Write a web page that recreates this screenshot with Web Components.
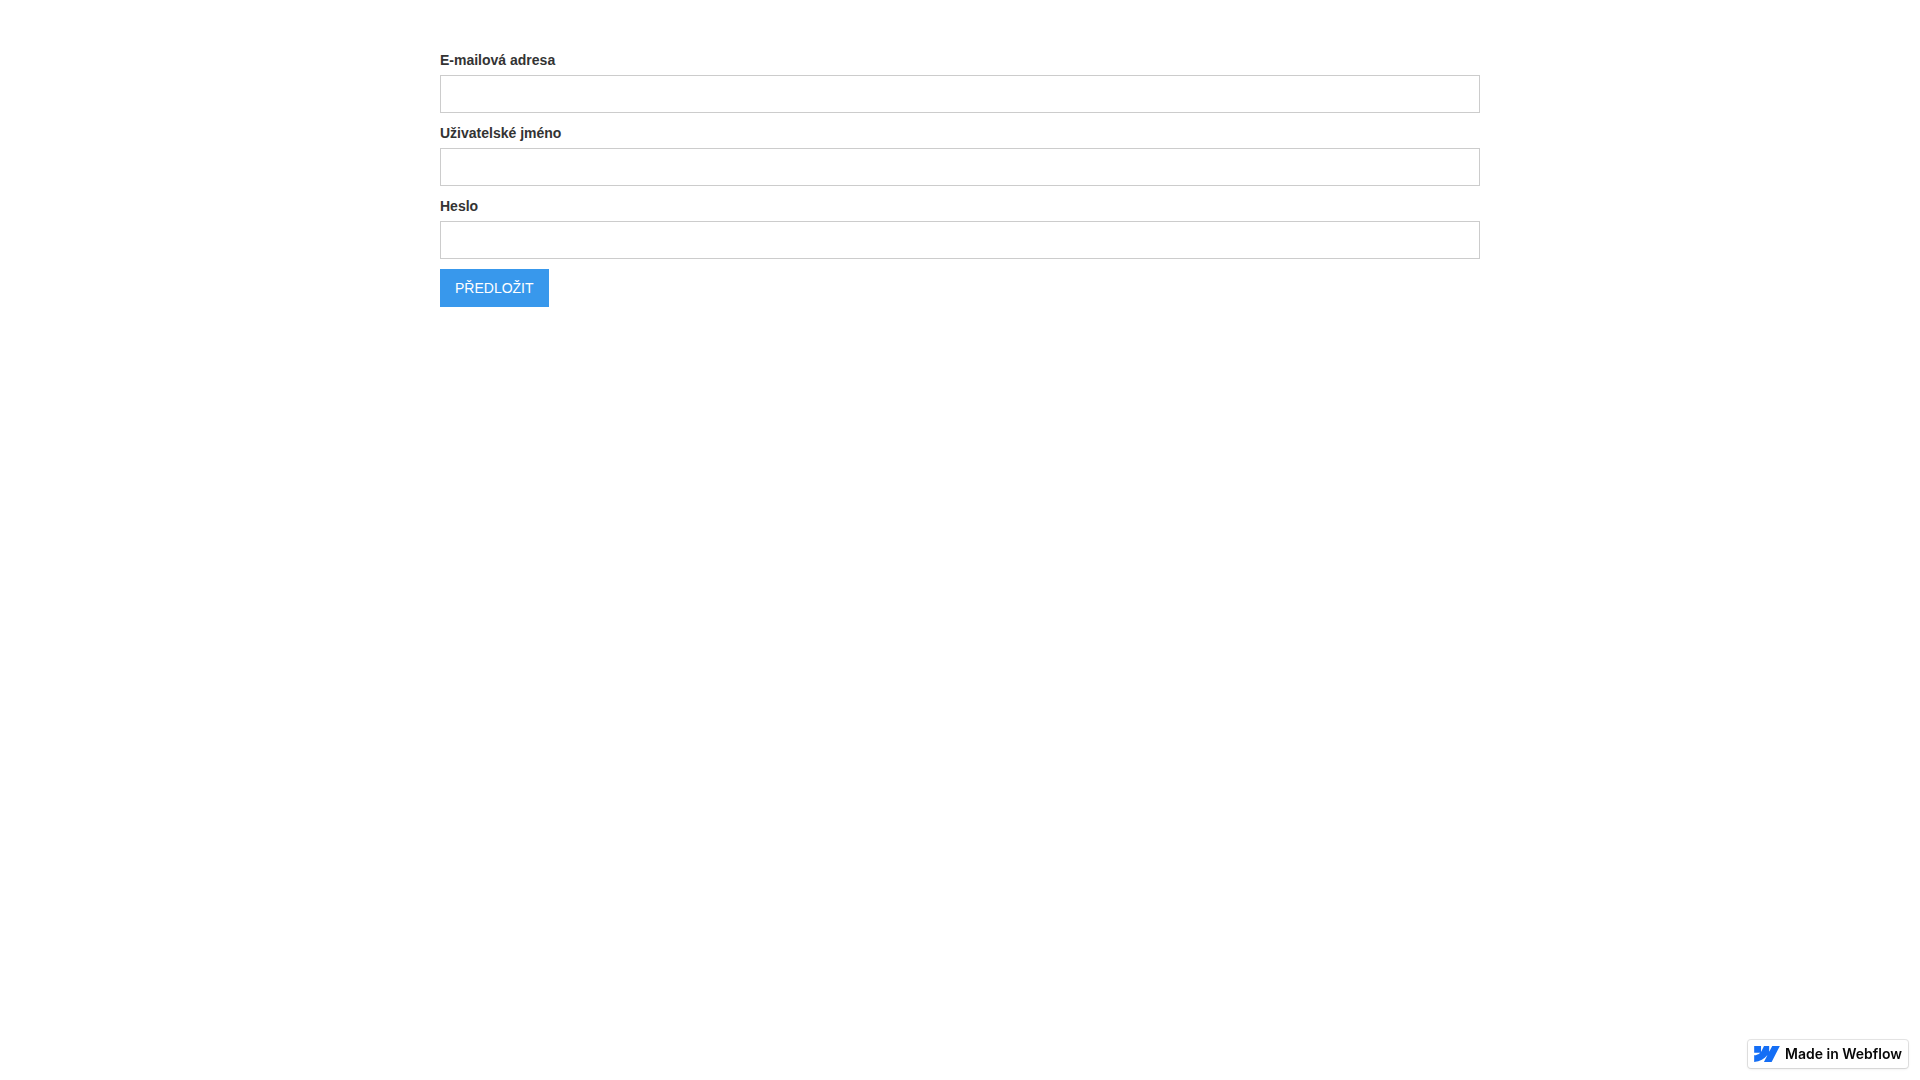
<!DOCTYPE html>
<html lang="cs">
<head>
<meta charset="utf-8">
<meta name="viewport" content="width=device-width, initial-scale=1">
<title>Registrace</title>
<style>
body { margin: 0; font: 14px/20px "Liberation Sans", Arial, sans-serif; color: #333; background: #fff; }
</style>
</head>
<body>
<signup-form>
  <form-field label="E-mailová adresa" type="email" name="email"></form-field>
  <form-field label="Uživatelské jméno" type="text" name="username"></form-field>
  <form-field label="Heslo" type="password" name="password"></form-field>
  <submit-button slot="action">PŘEDLOŽIT</submit-button>
</signup-form>
<made-in-badge>Made in Webflow</made-in-badge>
<script>
class SignupForm extends HTMLElement {
  constructor() {
    super();
    this.attachShadow({ mode: "open" }).innerHTML = `
      <style>
        :host { display: block; padding: 50px 20px; }
        form { display: flex; flex-direction: column; align-items: stretch; gap: 10px; max-width: 1040px; margin: 0 auto; }
        .actions { display: flex; }
      </style>
      <form><slot></slot><div class="actions"><slot name="action"></slot></div></form>`;
  }
}

class FormField extends HTMLElement {
  constructor() {
    super();
    this.attachShadow({ mode: "open" }).innerHTML = `
      <style>
        :host { display: flex; flex-direction: column; gap: 5px; }
        label { font-weight: 700; }
        input { box-sizing: border-box; width: 100%; height: 38px; margin: 0; padding: 8px 12px; border: 1px solid #ccc; border-radius: 0; background: #fff; color: #333; font: inherit; }
        input:focus { border-color: #3898ec; outline: 0; }
      </style>
      <label for="control"></label><input id="control">`;
  }
  connectedCallback() {
    this.shadowRoot.querySelector("label").textContent = this.getAttribute("label");
    const input = this.shadowRoot.querySelector("input");
    input.type = this.getAttribute("type");
    input.name = this.getAttribute("name");
  }
}

class SubmitButton extends HTMLElement {
  constructor() {
    super();
    this.attachShadow({ mode: "open" }).innerHTML = `
      <style>
        :host { display: block; }
        button { display: block; margin: 0; padding: 9px 15px; border: 0; border-radius: 0; background: #3898ec; color: #fff; font: inherit; cursor: pointer; }
      </style>
      <button type="submit"><slot></slot></button>`;
  }
}

class MadeInBadge extends HTMLElement {
  constructor() {
    super();
    this.attachShadow({ mode: "open" }).innerHTML = `
      <style>
        :host { display: block; position: fixed; right: 12px; bottom: 12px; }
        a { display: flex; align-items: center; gap: 5px; padding: 6px; border-radius: 3px; background: #fff; box-shadow: 0 0 0 1px rgba(0,0,0,.1), 0 1px 3px rgba(0,0,0,.1); color: #080808; font: 600 14px/16px Inter, sans-serif; text-decoration: none; white-space: nowrap; }
        svg { display: block; width: 26px; height: 16px; }
      </style>
      <a href="#"><svg viewBox="0 4.515 24 14.97" aria-hidden="true"><path fill="#146ef5" d="m24 4.515-7.658 14.97H9.149l3.205-6.204h-.144C9.566 16.713 5.621 18.973 0 19.485v-6.118s3.596-.213 5.71-2.435H0V4.515h6.417v5.278l.144-.001 2.622-5.277h4.854v5.244h.144l2.72-5.244H24Z"/></svg><slot></slot></a>`;
  }
}

customElements.define("signup-form", SignupForm);
customElements.define("form-field", FormField);
customElements.define("submit-button", SubmitButton);
customElements.define("made-in-badge", MadeInBadge);
</script>
</body>
</html>
